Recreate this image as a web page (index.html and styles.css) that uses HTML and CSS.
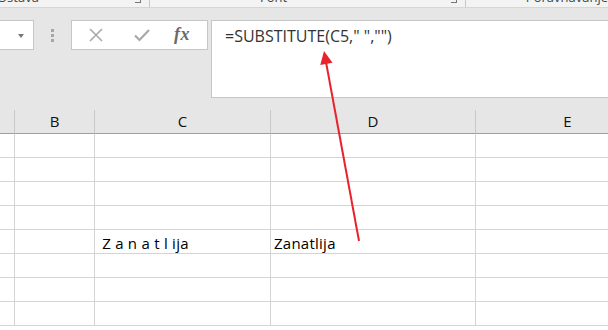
FILE: index.html
```html
<!DOCTYPE html>
<html>
<head>
    <title>Excel SUBSTITUTE</title>
    <link rel="stylesheet" href="styles.css">
</head>
<body>
    <div class="ribbon">
        <div class="group group-clip">
            <span class="group-label label-clip">Ostava</span>
            <span class="launcher"></span>
        </div>
        <div class="group group-font">
            <span class="group-label label-font">Font</span>
            <span class="launcher"></span>
        </div>
        <div class="group group-align">
            <span class="group-label">Poravnavanje</span>
        </div>
    </div>

    <div class="toolbar">
        <div class="namebox">
            <span class="caret"></span>
        </div>
        <div class="grip">
            <span></span><span></span><span></span>
        </div>
        <div class="fx-buttons">
            <svg class="btn-icon" width="16" height="16" viewBox="0 0 16 16">
                <path d="M2 2 L14 14 M14 2 L2 14" stroke="#a9a9a9" stroke-width="1.6" fill="none"/>
            </svg>
            <svg class="btn-icon" width="18" height="16" viewBox="0 0 18 16">
                <path d="M2 8.5 L6.5 13 L16 3" stroke="#a9a9a9" stroke-width="2.2" fill="none"/>
            </svg>
            <span class="fx">fx</span>
        </div>
        <div class="formula">=SUBSTITUTE(C5," ","")</div>
    </div>

    <div class="sheet">
        <div class="hcell"></div>
        <div class="hcell">B</div>
        <div class="hcell">C</div>
        <div class="hcell">D</div>
        <div class="hcell">E</div>

        <div class="cell"></div><div class="cell"></div><div class="cell"></div><div class="cell"></div><div class="cell"></div>
        <div class="cell"></div><div class="cell"></div><div class="cell"></div><div class="cell"></div><div class="cell"></div>
        <div class="cell"></div><div class="cell"></div><div class="cell"></div><div class="cell"></div><div class="cell"></div>
        <div class="cell"></div><div class="cell"></div><div class="cell"></div><div class="cell"></div><div class="cell"></div>
        <div class="cell"></div><div class="cell"></div><div class="cell">&nbsp;Z a n a t l ija</div><div class="cell">Zanatlija</div><div class="cell"></div>
        <div class="cell"></div><div class="cell"></div><div class="cell"></div><div class="cell"></div><div class="cell"></div>
        <div class="cell"></div><div class="cell"></div><div class="cell"></div><div class="cell"></div><div class="cell"></div>
        <div class="cell"></div><div class="cell"></div><div class="cell"></div><div class="cell"></div><div class="cell"></div>
    </div>

    <!-- callout arrow pointing at the formula -->
    <svg class="arrow" width="608" height="330" viewBox="0 0 608 330">
        <line x1="359" y1="241" x2="326" y2="62" stroke="#e8222e" stroke-width="2"/>
        <polygon points="324,51 332.5,62.7 320.3,65" fill="#e8222e"/>
    </svg>
</body>
</html>
```

FILE: styles.css
```css
body {
    margin: 0;
    width: 608px;
    height: 330px;
    overflow: hidden;
    position: relative;
    font-family: 'Open Sans', 'Noto Sans', sans-serif;
    background: #fff;
}
.ribbon {
    display: flex;
    height: 7px;
    overflow: hidden;
    background: #f3f3f3;
    border-bottom: 1px solid #d6d6d6;
}
.group {
    display: flex;
    position: relative;
    height: 7px;
    border-right: 1px solid #c8c8c8;
}
.group-clip {
    width: 157px;
}
.group-font {
    width: 332px;
}
.group-align {
    flex: 1;
    border-right: none;
}
.group-label {
    font-size: 13px;
    line-height: 14px;
    margin-top: -10px;
    color: #444;
    white-space: nowrap;
}
.label-clip {
    margin-left: -3px;
}
.label-font {
    margin-left: 110px;
}
.group-align .group-label {
    margin-left: 60px;
}
.launcher {
    position: absolute;
    right: 8px;
    top: -3px;
    width: 5px;
    height: 5px;
    border: 1px solid #777;
    border-top: none;
    border-left: none;
}
.toolbar {
    display: flex;
    align-items: flex-start;
    background: #e6e6e6;
    padding: 12px 0 12px 0;
}
.namebox {
    width: 33px;
    height: 28px;
    background: #fff;
    border: 1px solid #c6c6c6;
    border-left: none;
    display: flex;
    align-items: center;
    justify-content: flex-end;
}
.caret {
    width: 0;
    height: 0;
    border-left: 3.5px solid transparent;
    border-right: 3.5px solid transparent;
    border-top: 4px solid #777;
    margin-right: 9px;
    margin-top: 1px;
}
.grip {
    width: 37px;
    height: 30px;
    display: flex;
    flex-direction: column;
    align-items: center;
    justify-content: center;
    gap: 2px;
}
.grip span {
    width: 3px;
    height: 3px;
    background: #a6a6a6;
}
.fx-buttons {
    height: 28px;
    background: #fff;
    border: 1px solid #c6c6c6;
    display: flex;
    align-items: center;
    padding-left: 16px;
    width: 119px;
}
.btn-icon {
    margin-right: 29px;
}
.btn-icon + .btn-icon {
    margin-right: 23px;
}
.fx {
    font-family: 'Liberation Serif', serif;
    font-style: italic;
    font-weight: bold;
    font-size: 18px;
    color: #6a6a6a;
    letter-spacing: 0.5px;
    margin-top: -2px;
}
.formula {
    flex: 1;
    height: 72px;
    margin-left: 3px;
    background: #fff;
    border: 1px solid #c6c6c6;
    border-right: none;
    padding: 4px 0 0 13px;
    font-size: 16px;
    line-height: 22px;
    color: #333;
}
.sheet {
    display: grid;
    grid-template-columns: 15px 80px 176px 205px 184px;
    grid-template-rows: 24px;
    grid-auto-rows: 24px;
}
.hcell {
    background: #e6e6e6;
    border-right: 1px solid #c9c9c9;
    border-bottom: 1px solid #9f9f9f;
    text-align: center;
    font-size: 15px;
    line-height: 23px;
    color: #111;
}
.cell {
    border-right: 1px solid #d4d4d4;
    border-bottom: 1px solid #d4d4d4;
    font-size: 15px;
    line-height: 26px;
    padding-left: 3px;
    color: #000;
    white-space: nowrap;
    letter-spacing: 0.25px;
}
.arrow {
    position: absolute;
    left: 0;
    top: 0;
    pointer-events: none;
}
```
